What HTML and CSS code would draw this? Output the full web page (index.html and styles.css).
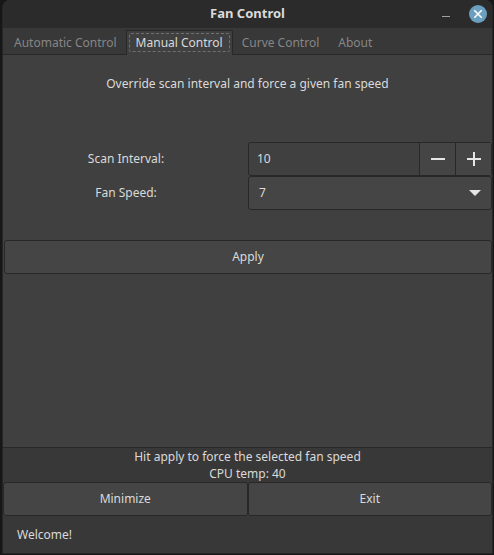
FILE: index.html
```html
<!DOCTYPE html>
<html lang="en">
<head>
<meta charset="utf-8">
<title>Fan Control</title>
<link rel="stylesheet" href="styles.css">
</head>
<body>
<div class="window">
  <header class="titlebar">
    <h1 class="title">Fan Control</h1>
    <div class="window-controls">
      <button class="window-button" type="button" aria-label="Minimize window">
        <svg width="18" height="18" viewBox="0 0 18 18"><path d="M5 11.5h8" stroke="#a0a0a0"/></svg>
      </button>
      <button class="window-button close" type="button" aria-label="Close window">
        <svg width="18" height="18" viewBox="0 0 18 18"><path d="M5.3 5.3l7.4 7.4M12.7 5.3l-7.4 7.4" stroke="#fff" stroke-width="1.6"/></svg>
      </button>
    </div>
  </header>
  <nav class="tabs" role="tablist">
    <button class="tab" type="button" role="tab">Automatic Control</button>
    <button class="tab active" type="button" role="tab" aria-selected="true"><span class="focus-ring">Manual Control</span></button>
    <button class="tab" type="button" role="tab">Curve Control</button>
    <button class="tab" type="button" role="tab">About</button>
  </nav>
  <main class="page">
    <p class="intro">Override scan interval and force a given fan speed</p>
    <form class="settings">
      <label class="label" for="interval">Scan Interval:</label>
      <div class="spin">
        <input class="spin-input" id="interval" type="text" inputmode="numeric" value="10">
        <button class="spin-button" type="button" aria-label="Decrease">
          <svg width="14" height="14" viewBox="0 0 14 14"><path d="M0 7h14" stroke="#e6e6e6" stroke-width="2"/></svg>
        </button>
        <button class="spin-button" type="button" aria-label="Increase">
          <svg width="14" height="14" viewBox="0 0 14 14"><path d="M0 7h14M7 0v14" stroke="#e6e6e6" stroke-width="2"/></svg>
        </button>
      </div>
      <label class="label" for="speed">Fan Speed:</label>
      <div class="combo">
        <select class="combo-select" id="speed">
          <option>0</option><option>1</option><option>2</option><option>3</option>
          <option>4</option><option>5</option><option>6</option><option selected>7</option>
        </select>
        <svg class="combo-arrow" width="12" height="6" viewBox="0 0 12 6"><path d="M0 0h12L6 6z" fill="#e6e6e6"/></svg>
      </div>
      <button class="button apply" type="button">Apply</button>
    </form>
  </main>
  <div class="messages">
    <p>Hit apply to force the selected fan speed</p>
    <p>CPU temp: 40</p>
  </div>
  <div class="actions">
    <button class="button" type="button">Minimize</button>
    <button class="button" type="button">Exit</button>
  </div>
  <footer class="statusbar">Welcome!</footer>
</div>
</body>
</html>
```
FILE: styles.css
```css
* {
  box-sizing: border-box;
}

body {
  margin: 0;
  min-height: 100vh;
  padding: 0 1px 1px 2px;
  display: flex;
  background: #171717;
  color: #dadada;
  font: 12px/17px "Noto Sans", sans-serif;
}

h1,
p {
  margin: 0;
}

button,
input,
select {
  margin: 0;
  padding: 0;
  border: 0;
  border-radius: 0;
  background: none;
  color: inherit;
  font: inherit;
}

svg {
  display: block;
}

.window {
  flex: 1;
  min-width: 0;
  display: flex;
  flex-direction: column;
  border: 1px solid #262626;
  border-top: 0;
  border-radius: 8px 8px 0 0;
  overflow: hidden;
  background: #383838;
}

.titlebar {
  display: grid;
  grid-template-columns: 1fr auto 1fr;
  align-items: center;
  height: 28px;
  padding: 0 5px;
  background: #2b2b2b;
}

.title {
  grid-column: 2;
  padding-bottom: 2px;
  font-size: 13px;
  line-height: 18px;
  font-weight: 700;
}

.window-controls {
  display: flex;
  justify-content: flex-end;
  gap: 14px;
}

.window-button {
  width: 18px;
  height: 18px;
  border-radius: 50%;
}

.close {
  background: #6a9fc0;
}

.tabs {
  display: flex;
  height: 27px;
  padding: 2px 1px 0;
  border-bottom: 1px solid #282828;
}

.tab {
  height: 25px;
  padding: 0 9px 2px;
  border-top: 1px solid transparent;
  border-left: 1px solid transparent;
  color: #868686;
}

.tab.active {
  border-color: #282828;
  background: #404040;
  color: #dadada;
}

.tab.active + .tab {
  border-left-color: #282828;
}

.focus-ring {
  display: block;
  margin: 0 -7px;
  padding: 0 6px;
  border: 1px dashed #707070;
  border-radius: 2px;
}

.page {
  flex: 1;
  padding: 20px 0;
  border-bottom: 1px solid #282828;
  background: #404040;
}

.intro {
  text-align: center;
}

.settings {
  display: grid;
  grid-template-columns: minmax(0, 1fr) minmax(0, 1fr);
  padding: 50px 0 0 1px;
}

.label {
  align-self: center;
  justify-self: center;
  padding-bottom: 2px;
}

.spin,
.combo,
.button {
  height: 34px;
  border: 1px solid #282828;
  border-radius: 3px;
}

.spin {
  display: flex;
}

.spin-input {
  flex: 1;
  min-width: 0;
  padding: 0 8px 2px;
}

.spin-button {
  display: grid;
  place-items: center;
  width: 36px;
  border-left: 1px solid #282828;
  background: #454545;
}

.combo {
  display: grid;
  align-items: center;
  background: #454545;
}

.combo-select {
  grid-area: 1 / 1;
  width: 100%;
  height: 32px;
  padding: 0 10px 2px;
  appearance: none;
}

.combo-arrow {
  grid-area: 1 / 1;
  justify-self: end;
  margin-right: 10px;
  pointer-events: none;
}

.button {
  padding-bottom: 2px;
  background: #454545;
}

.apply {
  grid-column: 1 / -1;
  margin-top: 30px;
}

.messages {
  text-align: center;
}

.actions {
  display: grid;
  grid-template-columns: 1fr 1fr;
}

.statusbar {
  padding: 10px 14px;
}
```
